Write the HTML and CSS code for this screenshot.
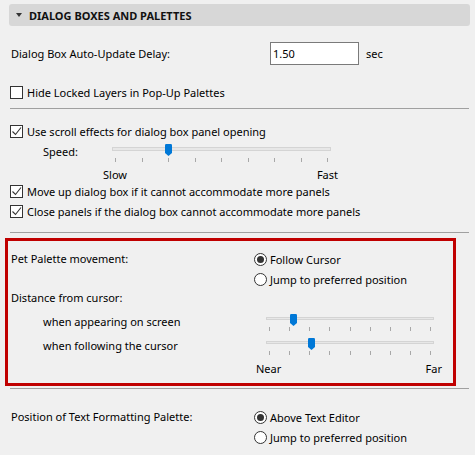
FILE: index.html
```html
<!DOCTYPE html>
<html>
<head>
<meta charset="utf-8">
<link rel="stylesheet" href="styles.css">
</head>
<body>
<div class="panel">
  <div class="header"><span class="tri"></span><span class="title">DIALOG BOXES AND PALETTES</span></div>

  <div class="delay-row">
    <span class="lbl">Dialog Box Auto-Update Delay:</span>
    <span class="field">1.50</span>
    <span class="unit">sec</span>
  </div>

  <div class="cb cb-hide"><span class="box"></span><span>Hide Locked Layers in Pop-Up Palettes</span></div>

  <div class="sep sep-1"></div>

  <div class="cb cb-scroll"><span class="box"><svg viewBox="0 0 13 13" width="13" height="13"><path d="M2.5 6.5 L5.5 9.5 L11 2.5" fill="none" stroke="#333" stroke-width="1.1"/></svg></span><span>Use scroll effects for dialog box panel opening</span></div>

  <div class="speed-row">
    <span class="speed-lbl">Speed:</span>
    <div class="slider slider-speed">
      <div class="track"></div>
      <div class="ticks"><i></i><i></i><i></i><i></i><i></i><i></i><i></i><i></i><i></i></div>
      <svg class="thumb" style="left:53px" viewBox="0 0 7 12" width="7" height="12"><path d="M0 1.2 Q0 0 1.2 0 H5.8 Q7 0 7 1.2 V9 L3.5 12 L0 9 Z" fill="#0078d7"/></svg>
    </div>
  </div>
  <div class="ends ends-speed"><span>Slow</span><span>Fast</span></div>

  <div class="cb cb-move"><span class="box"><svg viewBox="0 0 13 13" width="13" height="13"><path d="M2.5 6.5 L5.5 9.5 L11 2.5" fill="none" stroke="#333" stroke-width="1.1"/></svg></span><span>Move up dialog box if it cannot accommodate more panels</span></div>
  <div class="cb cb-close"><span class="box"><svg viewBox="0 0 13 13" width="13" height="13"><path d="M2.5 6.5 L5.5 9.5 L11 2.5" fill="none" stroke="#333" stroke-width="1.1"/></svg></span><span>Close panels if the dialog box cannot accommodate more panels</span></div>

  <div class="sep sep-2"></div>

  <div class="redbox">
    <div class="grid2">
      <span class="lbl">Pet Palette movement:</span>
      <div class="radios">
        <div class="radio on"><span class="circle"></span><span>Follow Cursor</span></div>
        <div class="radio"><span class="circle"></span><span>Jump to preferred position</span></div>
      </div>
    </div>
    <div class="dist-lbl">Distance from cursor:</div>
    <div class="pet-row pet-row-1">
      <span class="sub-lbl">when appearing on screen</span>
      <div class="slider slider-pet">
        <div class="track"></div>
        <div class="ticks"><i></i><i></i><i></i><i></i><i></i><i></i><i></i><i></i><i></i></div>
        <svg class="thumb" style="left:24px" viewBox="0 0 7 12" width="7" height="12"><path d="M0 1.2 Q0 0 1.2 0 H5.8 Q7 0 7 1.2 V9 L3.5 12 L0 9 Z" fill="#0078d7"/></svg>
      </div>
    </div>
    <div class="pet-row pet-row-2">
      <span class="sub-lbl">when following the cursor</span>
      <div class="slider slider-pet">
        <div class="track"></div>
        <div class="ticks"><i></i><i></i><i></i><i></i><i></i><i></i><i></i><i></i><i></i></div>
        <svg class="thumb" style="left:42px" viewBox="0 0 7 12" width="7" height="12"><path d="M0 1.2 Q0 0 1.2 0 H5.8 Q7 0 7 1.2 V9 L3.5 12 L0 9 Z" fill="#0078d7"/></svg>
      </div>
    </div>
    <div class="ends ends-pet"><span>Near</span><span>Far</span></div>
  </div>

  <div class="sep sep-3"></div>

  <div class="grid2 text-pos">
    <span class="lbl">Position of Text Formatting Palette:</span>
    <div class="radios">
      <div class="radio on"><span class="circle"></span><span>Above Text Editor</span></div>
      <div class="radio"><span class="circle"></span><span>Jump to preferred position</span></div>
    </div>
  </div>
</div>
</body>
</html>
```

FILE: styles.css
```css
* { box-sizing: border-box; }
html, body {
  margin: 0;
  padding: 0;
  background: #f0f0f0;
}
body {
  width: 475px;
  height: 455px;
  overflow: hidden;
  font-family: "Noto Sans", "Open Sans", sans-serif;
  font-size: 11px;
  color: #000;
}
.panel {
  display: flex;
  flex-direction: column;
}
.header {
  margin: 4px 5px 0 9px;
  height: 22px;
  background: #d7d7d7;
  border-radius: 3px;
  display: flex;
  align-items: center;
  padding-left: 7px;
}
.tri {
  width: 0;
  height: 0;
  border-left: 3px solid transparent;
  border-right: 3px solid transparent;
  border-top: 4px solid #333;
  margin-right: 7px;
}
.title {
  font-weight: bold;
  font-size: 11px;
  color: #111;
}
.delay-row {
  margin-top: 15px;
  height: 25px;
  display: flex;
  align-items: center;
  padding-left: 11px;
}
.delay-row .lbl { width: 259px; }
.field {
  width: 89px;
  height: 23px;
  background: #fff;
  border: 1px solid #7a7a7a;
  display: flex;
  align-items: center;
  padding-left: 2px;
}
.unit { margin-left: 7px; }

.cb {
  display: flex;
  align-items: center;
  height: 20px;
  padding-left: 10px;
  gap: 4px;
}
.box {
  width: 13px;
  height: 13px;
  border: 1px solid #333;
  background: #fff;
  position: relative;
  flex: none;
}
.box svg {
  position: absolute;
  left: -1px;
  top: -1px;
}
.cb-hide { margin-top: 16px; }
.cb-scroll { margin-top: 12px; }
.cb-move { margin-top: 0; }

.sep {
  height: 1px;
  background: #a0a0a0;
  margin-left: 10px;
  margin-right: 6px;
}
.sep-1 { margin-top: 6px; }
.sep-2 { margin-top: 11px; }
.sep-3 { margin-top: 2px; }

.speed-row {
  display: flex;
  height: 22px;
  padding-left: 43px;
}
.speed-lbl {
  width: 69px;
  padding-top: 3px;
}
.slider {
  position: relative;
  display: flex;
  flex-direction: column;
}
.slider-speed { width: 219px; padding-top: 6px; }
.slider-pet { width: 168px; }
.track {
  height: 4px;
  background: #e7e7e7;
  border: 1px solid #d4d4d4;
}
.ticks {
  display: flex;
  justify-content: space-between;
  padding: 0 3px;
  margin-top: 7px;
}
.ticks i {
  display: block;
  width: 1px;
  height: 4px;
  background: #a8a8a8;
}
.thumb {
  position: absolute;
  top: 3px;
}
.ends {
  display: flex;
  justify-content: space-between;
  align-items: center;
}
.ends-speed {
  margin-top: 4px;
  height: 14px;
  margin-left: 103px;
  width: 235px;
}
.redbox {
  margin: 5px 0 0 5px;
  width: 451px;
  height: 148px;
  border: 3px solid #c00000;
  padding: 8px 0 0 3px;
}
.grid2 {
  display: grid;
  grid-template-columns: 243px auto;
}
.grid2 .lbl { line-height: 20px; }
.radios {
  display: flex;
  flex-direction: column;
}
.radio {
  display: flex;
  align-items: center;
  height: 20px;
  gap: 3px;
}
.circle {
  width: 13px;
  height: 13px;
  border-radius: 50%;
  border: 1px solid #333;
  background: #fff;
  display: flex;
  align-items: center;
  justify-content: center;
}
.radio.on .circle::after {
  content: "";
  width: 7px;
  height: 7px;
  border-radius: 50%;
  background: #333;
}
.dist-lbl {
  height: 18px;
  line-height: 18px;
}
.pet-row {
  display: flex;
  height: 24px;
  padding-left: 32px;
}
.sub-lbl {
  width: 223px;
  line-height: 20px;
  padding-top: 5px;
}
.pet-row .slider { padding-top: 10px; }
.pet-row .thumb { top: 7px; }
.ends-pet {
  margin-top: 5px;
  height: 16px;
  margin-left: 245px;
  width: 186px;
}
.text-pos {
  margin-top: 18px;
  padding-left: 11px;
}
```
